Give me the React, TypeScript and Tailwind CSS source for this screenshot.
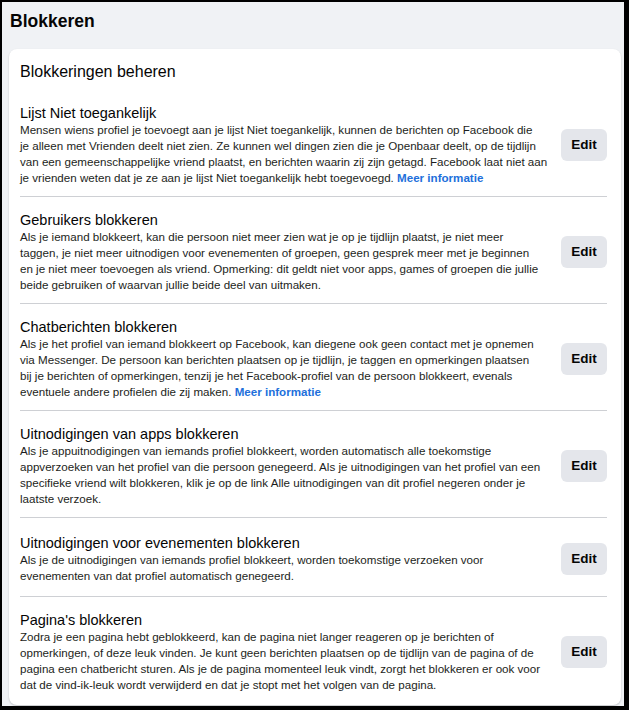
import type React from "react"

type Section = {
  title: string
  lines: React.ReactNode[]
}

const link = <span className="font-semibold text-[#216fdb]">Meer informatie</span>

const sections: Section[] = [
  {
    title: "Lijst Niet toegankelijk",
    lines: [
      "Mensen wiens profiel je toevoegt aan je lijst Niet toegankelijk, kunnen de berichten op Facebook die",
      "je alleen met Vrienden deelt niet zien. Ze kunnen wel dingen zien die je Openbaar deelt, op de tijdlijn",
      "van een gemeenschappelijke vriend plaatst, en berichten waarin zij zijn getagd. Facebook laat niet aan",
      <>je vrienden weten dat je ze aan je lijst Niet toegankelijk hebt toegevoegd. {link}</>,
    ],
  },
  {
    title: "Gebruikers blokkeren",
    lines: [
      "Als je iemand blokkeert, kan die persoon niet meer zien wat je op je tijdlijn plaatst, je niet meer",
      "taggen, je niet meer uitnodigen voor evenementen of groepen, geen gesprek meer met je beginnen",
      "en je niet meer toevoegen als vriend. Opmerking: dit geldt niet voor apps, games of groepen die jullie",
      "beide gebruiken of waarvan jullie beide deel van uitmaken.",
    ],
  },
  {
    title: "Chatberichten blokkeren",
    lines: [
      "Als je het profiel van iemand blokkeert op Facebook, kan diegene ook geen contact met je opnemen",
      "via Messenger. De persoon kan berichten plaatsen op je tijdlijn, je taggen en opmerkingen plaatsen",
      "bij je berichten of opmerkingen, tenzij je het Facebook-profiel van de persoon blokkeert, evenals",
      <>eventuele andere profielen die zij maken. {link}</>,
    ],
  },
  {
    title: "Uitnodigingen van apps blokkeren",
    lines: [
      "Als je appuitnodigingen van iemands profiel blokkeert, worden automatisch alle toekomstige",
      "appverzoeken van het profiel van die persoon genegeerd. Als je uitnodigingen van het profiel van een",
      "specifieke vriend wilt blokkeren, klik je op de link Alle uitnodigingen van dit profiel negeren onder je",
      "laatste verzoek.",
    ],
  },
  {
    title: "Uitnodigingen voor evenementen blokkeren",
    lines: [
      "Als je de uitnodigingen van iemands profiel blokkeert, worden toekomstige verzoeken voor",
      "evenementen van dat profiel automatisch genegeerd.",
    ],
  },
  {
    title: "Pagina's blokkeren",
    lines: [
      "Zodra je een pagina hebt geblokkeerd, kan de pagina niet langer reageren op je berichten of",
      "opmerkingen, of deze leuk vinden. Je kunt geen berichten plaatsen op de tijdlijn van de pagina of de",
      "pagina een chatbericht sturen. Als je de pagina momenteel leuk vindt, zorgt het blokkeren er ook voor",
      "dat de vind-ik-leuk wordt verwijderd en dat je stopt met het volgen van de pagina.",
    ],
  },
]

function Row({ section, last }: { section: Section; last: boolean }) {
  return (
    <div className={`flex items-center pt-[14px] pb-[10px] ${last ? "" : "border-b border-[#ced0d4]"}`}>
      <div className="flex-1 min-w-0 pr-3">
        <p className="text-[14.5px] leading-[18px] text-[#050505]">{section.title}</p>
        <div className="text-[11.6px] leading-4 text-[#1c1e21]">
          {section.lines.map((line, i) => (
            <span key={i} className="block whitespace-nowrap">
              {line}
            </span>
          ))}
        </div>
      </div>
      <div className="py-[11px] shrink-0">
        <button className="w-[46px] h-8 rounded-md bg-[#e4e6eb] text-[13.5px] font-semibold text-[#050505]">
          Edit
        </button>
      </div>
    </div>
  )
}

export default function App() {
  return (
    <div
      className="h-[710px] bg-black pt-[2px] pl-[2px] pr-[5px] pb-[4px]"
      style={{ fontFamily: '"Liberation Sans", Arial, sans-serif' }}
    >
      <div className="h-full bg-[#f0f2f5] pt-[8px] pl-[7px] pr-[3px]">
        <h1 className="ml-[1px] text-[17.5px] leading-[22px] font-bold text-[#050505]">Blokkeren</h1>
        <div className="mt-[17px] rounded-lg bg-white pl-[11px] pr-[14px] pt-[13px] pb-[2px] shadow-[0_1px_2px_rgba(0,0,0,0.2)]">
          <h2 className="text-[16px] leading-5 text-[#050505] mb-2">Blokkeringen beheren</h2>
          {sections.map((s, i) => (
            <Row key={s.title} section={s} last={i === sections.length - 1} />
          ))}
        </div>
      </div>
    </div>
  )
}
